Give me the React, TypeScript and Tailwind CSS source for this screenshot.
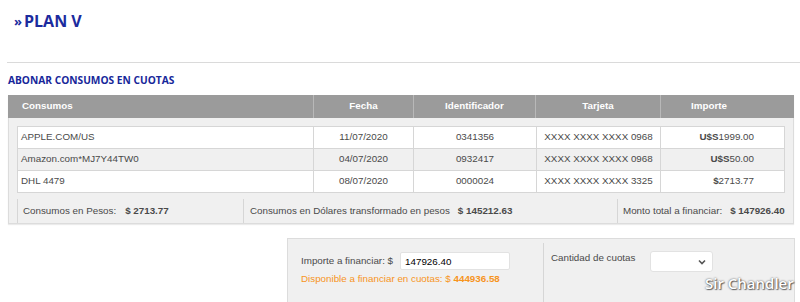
import React from 'react';

const rows = [
    { desc: 'APPLE.COM/US', fecha: '11/07/2020', id: '0341356', card: 'XXXX XXXX XXXX 0968', cur: 'U$S', amount: '1999.00', alt: false },
    { desc: 'Amazon.com*MJ7Y44TW0', fecha: '04/07/2020', id: '0932417', card: 'XXXX XXXX XXXX 0968', cur: 'U$S', amount: '50.00', alt: true },
    { desc: 'DHL 4479', fecha: '08/07/2020', id: '0000024', card: 'XXXX XXXX XXXX 3325', cur: '$', amount: '2713.77', alt: false },
];

export default function App() {
    return (
        <div className="relative w-[800px] h-[302px] overflow-hidden bg-white font-['Liberation_Sans',Arial,sans-serif] text-[9.8px] text-[#4a4a4a]">
            {/* Title */}
            <div className="h-[31px] pt-[10px] pl-[14px] flex items-center font-['Open_Sans',sans-serif] font-bold text-[#1c2b9e]">
                <span className="text-[13px] leading-[22px] mr-[2px]">»</span>
                <span className="text-[16px] leading-[22px]">PLAN V</span>
            </div>

            <div className="mt-[31px] ml-[7px] border-t border-[#dadada]"></div>

            <h2 className="mt-[10px] ml-[8px] h-[14px] leading-[14px] font-['Open_Sans',sans-serif] font-bold text-[10.2px] text-[#17279a]">
                ABONAR CONSUMOS EN CUOTAS
            </h2>

            {/* Consumos table */}
            <div className="mt-[8px] ml-[8px] w-[786px] bg-[#f0f0f0] border-l border-r border-b border-[#dcdcdc] shadow-[0_1px_1px_rgba(0,0,0,0.08)]">
                <div className="flex h-[23px] bg-[#9b9b9b] text-white font-bold items-center -ml-px -mr-px">
                    <div className="w-[305px] pl-[14px]">Consumos</div>
                    <div className="w-[100px] h-full flex items-center justify-center border-l border-[#b8b8b8]">Fecha</div>
                    <div className="w-[122px] h-full flex items-center justify-center border-l border-[#b8b8b8]">Identificador</div>
                    <div className="w-[125px] h-full flex items-center justify-center border-l border-[#b8b8b8]">Tarjeta</div>
                    <div className="flex-1 h-full flex items-center border-l border-[#b8b8b8]">
                        <span className="w-[96px] text-center">Importe</span>
                    </div>
                </div>

                <div className="pt-[8px] px-[8px]">
                    <div className="border-t border-l border-r border-[#d6d6d6]">
                        {rows.map((r) => (
                            <div key={r.id} className={`flex h-[22px] items-center border-b border-[#d6d6d6] ${r.alt ? 'bg-[#f0f0f0]' : 'bg-white'}`}>
                                <div className="w-[295px] pl-[3px]">{r.desc}</div>
                                <div className="w-[100px] h-full flex items-center justify-center border-l border-[#d6d6d6]">{r.fecha}</div>
                                <div className="w-[123px] h-full flex items-center justify-center border-l border-[#d6d6d6]">{r.id}</div>
                                <div className="w-[124px] h-full flex items-center justify-center border-l border-[#d6d6d6]">{r.card}</div>
                                <div className="flex-1 h-full flex items-center justify-end pr-[30px] border-l border-[#d6d6d6]">
                                    <span className="font-bold">{r.cur}</span>{r.amount}
                                </div>
                            </div>
                        ))}
                    </div>

                    <div className="mt-[6px] flex h-[24px] items-center whitespace-nowrap">
                        <div className="w-[226px] shrink-0 h-full flex items-center pl-[5px] border-l border-[#d6d6d6]">
                            Consumos en Pesos:<span className="ml-[9px] font-bold">$ 2713.77</span>
                        </div>
                        <div className="w-[374px] shrink-0 h-full flex items-center pl-[6px] border-l border-[#d6d6d6]">
                            Consumos en Dólares transformado en pesos<span className="ml-[8px] font-bold">$ 145212.63</span>
                        </div>
                        <div className="flex-1 h-full flex items-center pl-[5px] border-l border-[#d6d6d6]">
                            Monto total a financiar:<span className="ml-[8px] font-bold">$ 147926.40</span>
                        </div>
                    </div>
                </div>
            </div>

            {/* Financing form */}
            <div className="mt-[14px] ml-[287px] w-[508px] h-[80px] flex bg-[#f0f0f0] border border-[#dcdcdc]">
                <div className="w-[256px] mt-[4px] border-r border-[#d6d6d6] pl-[13px] pt-[9px]">
                    <div className="flex items-center h-[18px]">
                        <span>Importe a financiar: $</span>
                        <input
                            readOnly
                            value="147926.40"
                            className="ml-[7px] w-[110px] h-[18px] px-[4px] bg-white border border-[#e2e2e2] rounded-[2px] text-[9.8px] text-black outline-none font-['Liberation_Sans',Arial,sans-serif]"
                        />
                    </div>
                    <div className="mt-[1px] h-[16px] leading-[16px] text-[#f7941d]">
                        Disponible a financiar en cuotas: $ <span className="font-bold">444936.58</span>
                    </div>
                </div>
                <div className="flex-1 pl-[7px] pt-[12px] flex items-start">
                    <span className="h-[16px] leading-[16px] mt-[-1px]">Cantidad de cuotas</span>
                    <div className="ml-[15px] w-[63px] h-[21px] bg-white border border-[#e2e2e2] rounded-[3px] flex items-center justify-end pr-[6px]">
                        <svg width="8" height="6" viewBox="0 0 8 6">
                            <polyline points="1,1.5 4,4.5 7,1.5" fill="none" stroke="#555" strokeWidth="1.6" />
                        </svg>
                    </div>
                </div>
            </div>

            <div className="absolute left-[705px] top-[272px] font-['Open_Sans',sans-serif] font-semibold text-[15px] text-white [text-shadow:0_0_2px_rgba(0,0,0,0.7),1px_1px_1px_rgba(0,0,0,0.5)]">
                Sir Chandler
            </div>
        </div>
    );
}
